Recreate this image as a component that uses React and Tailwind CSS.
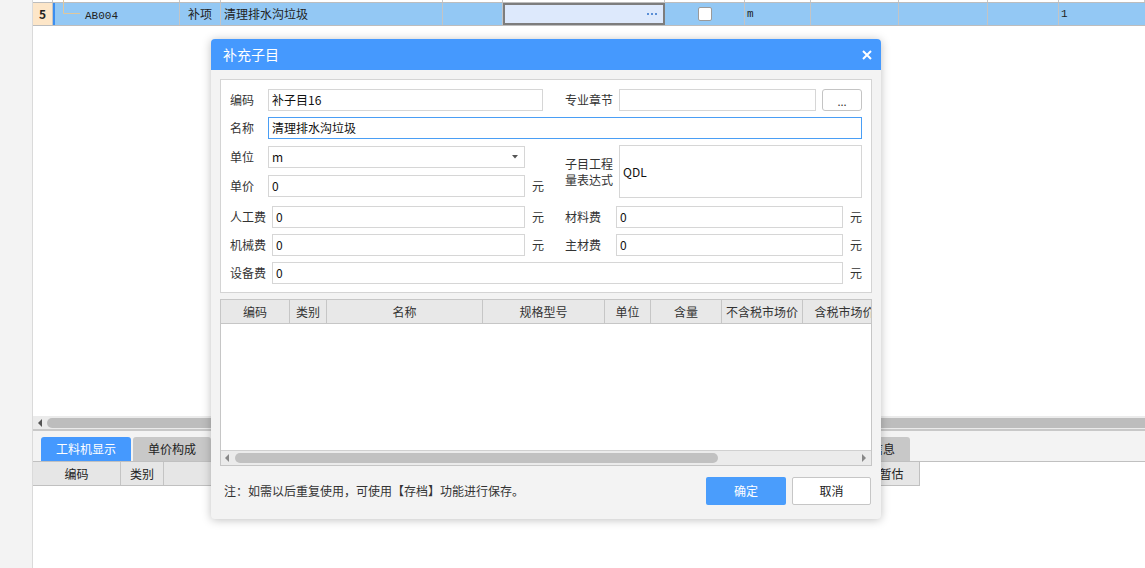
import React from "react";

const FONT = "font-['Noto_Sans_CJK_SC','Noto_Sans',sans-serif]";

// column widths of the main grid, starting at x=33
const gridCols = [
  "w-[20px]",
  "w-[127px]",
  "w-[41px]",
  "w-[222px]",
  "w-[60px]",
  "w-[162px]",
  "w-[80px]",
  "w-[66px]",
  "w-[88px]",
  "w-[89px]",
  "w-[71px]",
  "w-[86px]",
];

const tabs = [
  { label: "工料机显示", w: "w-[90px]", active: true },
  { label: "单价构成", w: "w-[78px]" },
  { label: "标准换算", w: "w-[78px]" },
  { label: "换算信息", w: "w-[78px]" },
  { label: "特征及内容", w: "w-[90px]" },
  { label: "工程量明细", w: "w-[90px]" },
  { label: "反查图形工程量", w: "w-[113px]" },
  { label: "组价方案", w: "w-[78px]" },
  { label: "安装费用", w: "w-[78px]" },
  { label: "说明信息", w: "w-[78px]" },
];

const dlgCols = [
  { label: "编码", w: "w-[69px]" },
  { label: "类别", w: "w-[37px]" },
  { label: "名称", w: "w-[156px]" },
  { label: "规格型号", w: "w-[122px]" },
  { label: "单位", w: "w-[46px]" },
  { label: "含量", w: "w-[71px]" },
  { label: "不含税市场价", w: "w-[81px]" },
  { label: "含税市场价", w: "w-[84px]" },
];

const GridTop = () => (
  <div className="flex flex-col">
    {/* tail of the row above */}
    <div className="flex h-[2px]">
      {gridCols.map((w, i) => (
        <div key={i} className={`${w} shrink-0 border-r border-[#c8c8c8]`} />
      ))}
    </div>
    <div className="flex h-[24px] border-y border-[#bdbdbd] bg-[#93c8f4] leading-[22px]">
      <div className={`${gridCols[0]} shrink-0 border-r border-[#c4c4c4] bg-[#fde6c8] text-center font-bold`}>
        5
      </div>
      <div className={`${gridCols[1]} relative shrink-0 border-l-2 border-r border-l-[#3b8ef0] border-r-[#c4c4c4] pl-[30px]`}>
        <svg className="absolute left-[8px] top-[-3px]" width="20" height="16">
          <path d="M0.5 0 V13.5 H17" stroke="#e0c79c" strokeWidth="1" fill="none" />
        </svg>
        <span className="font-['Liberation_Mono',monospace] text-[11px]">AB004</span>
      </div>
      <div className={`${gridCols[2]} shrink-0 border-r border-[#c4c4c4] pl-[8px]`}>补项</div>
      <div className={`${gridCols[3]} shrink-0 border-r border-[#c4c4c4] pl-[3px]`}>清理排水沟垃圾</div>
      <div className={`${gridCols[4]} shrink-0 border-r border-[#c4c4c4]`} />
      <div className={`${gridCols[5]} flex shrink-0 items-center justify-end border-2 border-[#7d7d7d] bg-[#dde9fc] pr-[6px]`}>
        <svg width="10" height="3">
          <rect x="0" y="0" width="2" height="2" fill="#5b8fd6" />
          <rect x="4" y="0" width="2" height="2" fill="#5b8fd6" />
          <rect x="8" y="0" width="2" height="2" fill="#5b8fd6" />
        </svg>
      </div>
      <div className={`${gridCols[6]} flex shrink-0 items-center justify-center border-r border-[#c4c4c4]`}>
        <div className="h-[14px] w-[14px] rounded-[2px] border border-[#9a9a9a] bg-white" />
      </div>
      <div className={`${gridCols[7]} shrink-0 border-r border-[#c4c4c4] pl-[2px] font-['Liberation_Mono',monospace] text-[11px]`}>m</div>
      <div className={`${gridCols[8]} shrink-0 border-r border-[#c4c4c4]`} />
      <div className={`${gridCols[9]} shrink-0 border-r border-[#c4c4c4]`} />
      <div className={`${gridCols[10]} shrink-0 border-r border-[#c4c4c4]`} />
      <div className={`${gridCols[11]} shrink-0 pl-[2px] font-['Liberation_Mono',monospace] text-[11px]`}>1</div>
    </div>
  </div>
);

const LeftArrow = ({ color = "#666" }) => (
  <svg width="5" height="8">
    <path d="M4 0 L0 4 L4 8 Z" fill={color} />
  </svg>
);

const RightArrow = ({ color = "#666" }) => (
  <svg width="5" height="8">
    <path d="M0 0 L4 4 L0 8 Z" fill={color} />
  </svg>
);

const Box = ({ w, focused = false, children, className = "" }) => (
  <div
    className={`${w} flex h-[22px] shrink-0 items-center border bg-white px-[3px] text-[12px] text-[#111] ${
      focused ? "border-[#4a9ef5]" : "border-[#d6d6d6]"
    } ${className}`}
  >
    {children}
  </div>
);

const Yuan = () => <span className="ml-[7px] w-[12px] shrink-0 text-[12px] text-[#333]">元</span>;

const Dialog = () => (
  <div className="absolute left-[211px] top-[39px] z-10 flex h-[480px] w-[670px] flex-col overflow-hidden rounded-[4px] bg-[#f3f3f3] shadow-[0_1px_10px_rgba(0,0,0,0.25)]">
    <div className="flex h-[31px] shrink-0 items-center justify-between bg-[#4599fe] pl-[12px] pr-[9px]">
      <span className="text-[14px] text-white">补充子目</span>
      <svg width="10" height="10">
        <path d="M1 1 L9 9 M9 1 L1 9" stroke="white" strokeWidth="2" />
      </svg>
    </div>

    <div className="flex flex-1 flex-col px-[9px] pt-[9px]">
      {/* form panel */}
      <div className="h-[214px] shrink-0 border border-[#d4d4d4] bg-white px-[9px] pt-[9px] text-[#333]">
        <div className="flex h-[22px] items-center">
          <span className="w-[38px] shrink-0">编码</span>
          <Box w="w-[275px]">补子目16</Box>
          <span className="ml-[22px] w-[54px] shrink-0">专业章节</span>
          <Box w="w-[197px]" />
          <div className="ml-[6px] flex h-[22px] w-[40px] items-end justify-center rounded-[3px] border border-[#c4c4c4] bg-white pb-[3px] text-[11px] leading-[11px]">
            ...
          </div>
        </div>

        <div className="mt-[6px] flex h-[22px] items-center">
          <span className="w-[38px] shrink-0">名称</span>
          <Box w="flex-1" focused>清理排水沟垃圾</Box>
        </div>

        <div className="mt-[6px] flex h-[53px] items-stretch">
          <div className="flex w-[314px] shrink-0 flex-col pt-[1px]">
            <div className="flex h-[22px] items-center">
              <span className="w-[38px] shrink-0">单位</span>
              <Box w="w-[257px]" className="justify-between pr-[6px]">
                <span>m</span>
                <svg width="6" height="4">
                  <path d="M0 0 H6 L3 3.5 Z" fill="#555" />
                </svg>
              </Box>
            </div>
            <div className="mt-[7px] flex h-[22px] items-center">
              <span className="w-[38px] shrink-0">单价</span>
              <Box w="w-[257px]">0</Box>
              <Yuan />
            </div>
          </div>
          <div className="ml-[21px] flex w-[54px] shrink-0 items-center leading-[16px]">
            子目工程
            <br />
            量表达式
          </div>
          <div className="flex flex-1 items-center border border-[#d6d6d6] bg-white px-[3px] text-[#111]">QDL</div>
        </div>

        <div className="mt-[8px] flex h-[22px] items-center">
          <span className="w-[42px] shrink-0">人工费</span>
          <Box w="w-[253px]">0</Box>
          <Yuan />
          <span className="ml-[21px] w-[51px] shrink-0">材料费</span>
          <Box w="w-[227px]">0</Box>
          <Yuan />
        </div>

        <div className="mt-[6px] flex h-[22px] items-center">
          <span className="w-[42px] shrink-0">机械费</span>
          <Box w="w-[253px]">0</Box>
          <Yuan />
          <span className="ml-[21px] w-[51px] shrink-0">主材费</span>
          <Box w="w-[227px]">0</Box>
          <Yuan />
        </div>

        <div className="mt-[6px] flex h-[22px] items-center">
          <span className="w-[42px] shrink-0">设备费</span>
          <Box w="flex-1">0</Box>
          <Yuan />
        </div>
      </div>

      {/* material table */}
      <div className="mt-[6px] flex h-[167px] shrink-0 flex-col border border-[#c6c6c6] bg-white">
        <div className="flex h-[24px] shrink-0 overflow-hidden border-b border-[#c6c6c6] bg-[#e8e8e8] text-[#333]">
          {dlgCols.map((c) => (
            <div key={c.label} className={`${c.w} flex shrink-0 items-center justify-center whitespace-nowrap border-r border-[#c6c6c6]`}>
              {c.label}
            </div>
          ))}
        </div>
        <div className="flex-1" />
        <div className="flex h-[15px] shrink-0 items-center border-t border-[#d0d0d0] bg-[#ebebeb] px-[4px]">
          <LeftArrow color="#888" />
          <div className="ml-[5px] h-[10px] w-[483px] rounded-full bg-[#c1c1c1]" />
          <div className="flex-1" />
          <RightArrow color="#888" />
        </div>
      </div>

      {/* footer */}
      <div className="mt-[11px] flex items-center justify-between">
        <span className="pl-[4px] text-[12px] text-[#333]">注：如需以后重复使用，可使用【存档】功能进行保存。</span>
        <div className="flex gap-[6px] pr-[1px]">
          <div className="flex h-[28px] w-[80px] items-center justify-center rounded-[2px] bg-[#4a9dfc] text-white">确定</div>
          <div className="flex h-[28px] w-[79px] items-center justify-center rounded-[2px] border border-[#c6c6c6] bg-white text-[#222]">取消</div>
        </div>
      </div>
    </div>
  </div>
);

export default function App() {
  return (
    <div className={`${FONT} relative flex h-[568px] w-[1145px] overflow-hidden bg-white text-[12px] text-[#222]`}>
      <div className="h-full w-[33px] shrink-0 border-r border-[#dadada] bg-[#f3f3f3]" />

      <div className="flex min-w-0 flex-1 flex-col">
        <div className="h-[416px] shrink-0">
          <GridTop />
        </div>

        {/* horizontal scrollbar */}
        <div className="flex h-[13px] shrink-0 items-center bg-[#ebebeb] pl-[5px]">
          <LeftArrow color="#555" />
          <div className="ml-[4px] h-[10px] flex-1 rounded-l-full bg-[#bdbdbd]" />
        </div>
        <div className="h-[2px] shrink-0 bg-[#c8c8c8]" />

        {/* tabs */}
        <div className="flex h-[31px] shrink-0 items-end gap-[2px] border-b border-[#c0c0c0] bg-[#f3f3f3] pl-[8px]">
          {tabs.map((t) => (
            <div
              key={t.label}
              className={`${t.w} flex h-[24px] shrink-0 items-center justify-center rounded-t-[3px] text-[12px] ${
                t.active ? "bg-[#4599fe] text-white" : "bg-[#c8c8c8] text-[#222]"
              }`}
            >
              {t.label}
            </div>
          ))}
        </div>

        {/* lower grid header */}
        <div className="flex h-[24px] w-[887px] shrink-0 border-b border-r border-[#c0c0c0] bg-[#e6e6e6] text-[#222]">
          <div className="flex w-[88px] items-center justify-center border-r border-[#c4c4c4]">编码</div>
          <div className="flex w-[43px] items-center justify-center border-r border-[#c4c4c4]">类别</div>
          <div className="flex-1" />
          <div className="flex w-[56px] items-center justify-center border-l border-[#c4c4c4]">暂估</div>
        </div>
        <div className="flex-1 bg-white" />
      </div>

      <Dialog />
    </div>
  );
}
